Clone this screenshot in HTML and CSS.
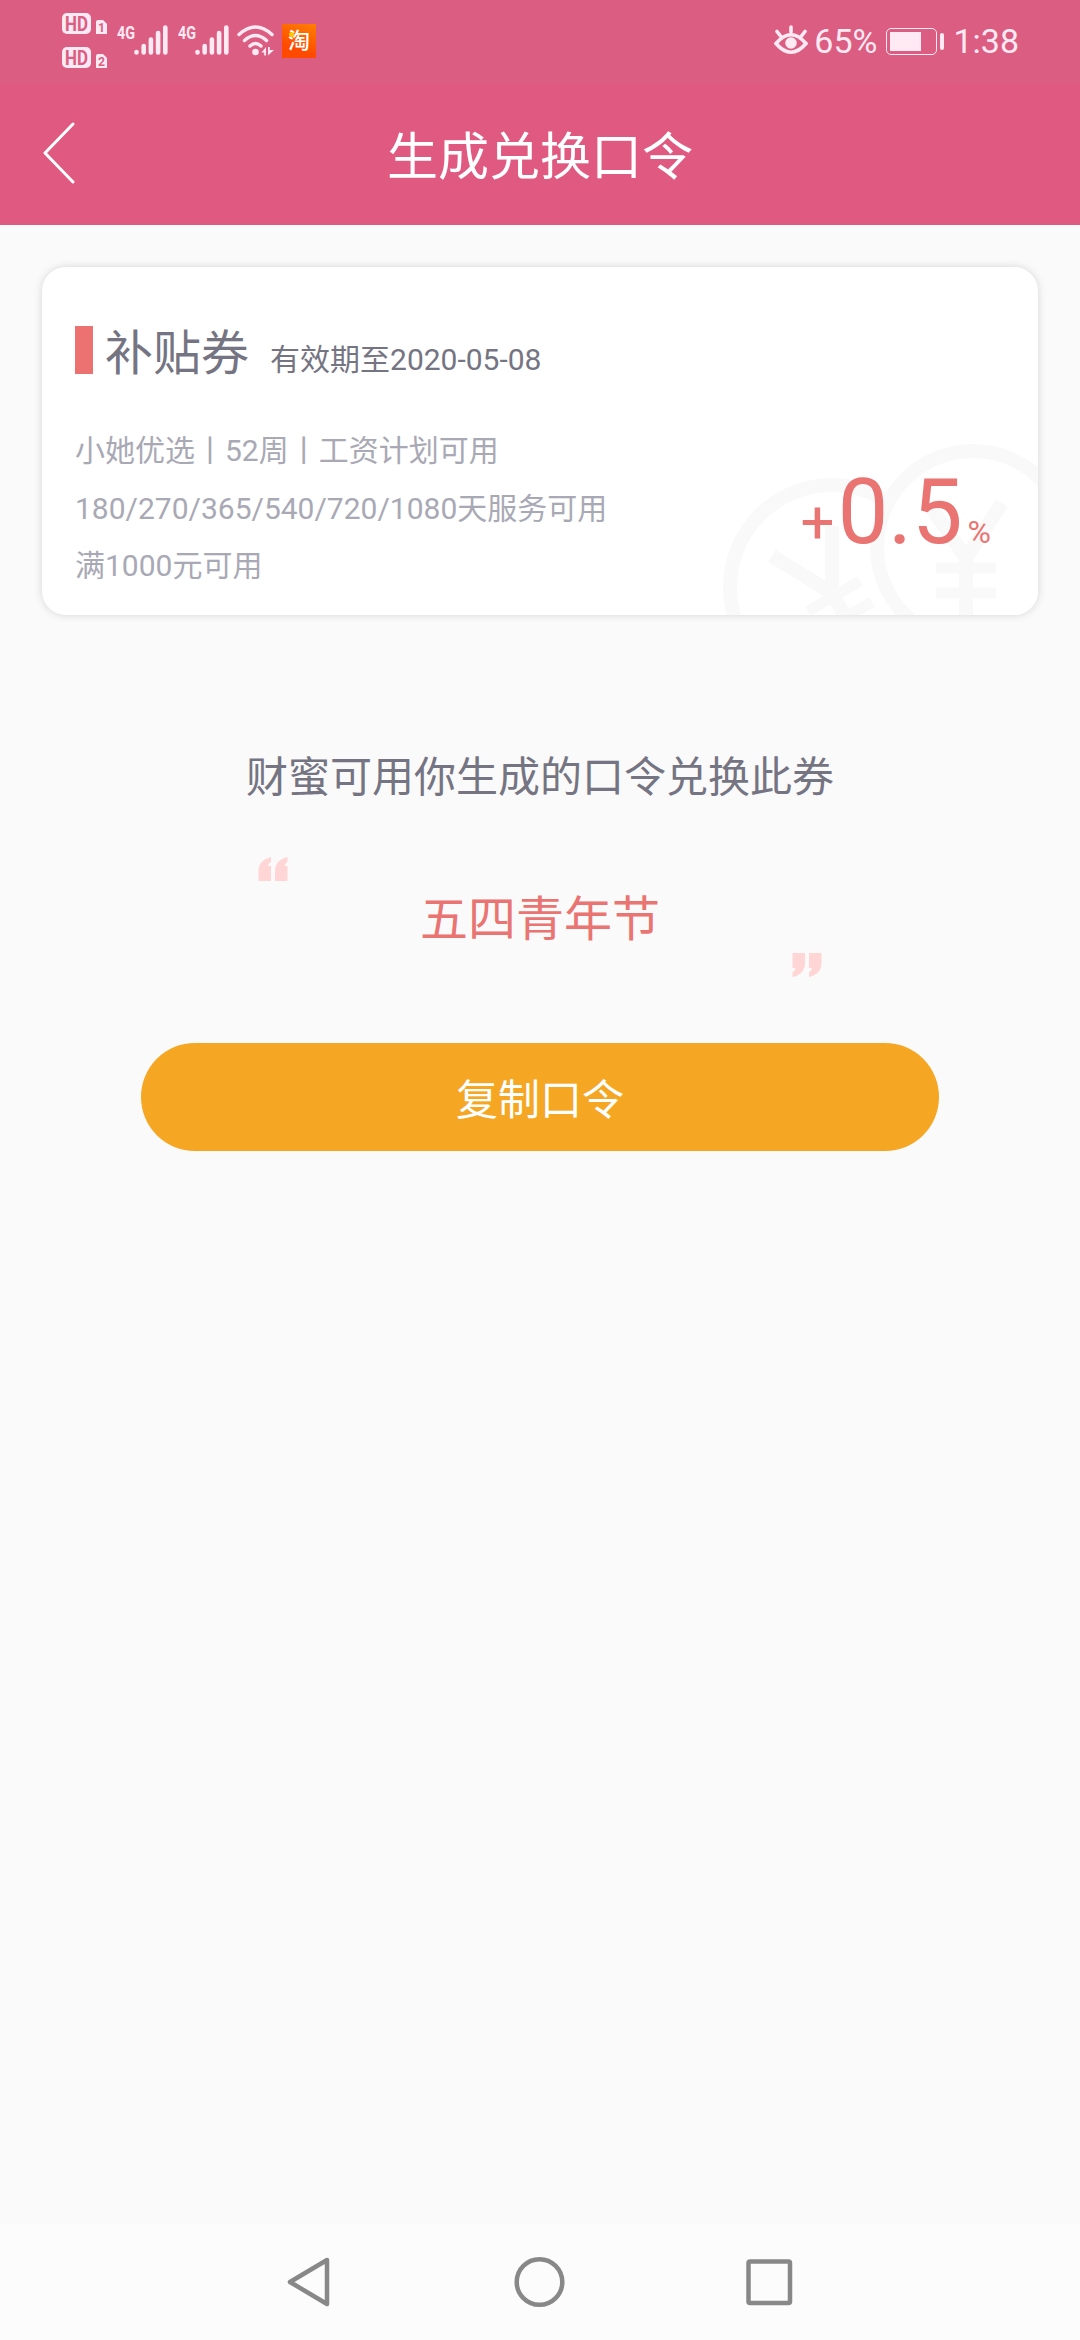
FILE: index.html
```html
<!DOCTYPE html>
<html lang="zh-CN">
<head>
    <meta charset="UTF-8">
    <meta name="viewport" content="width=device-width, initial-scale=1.0">
    <title>生成兑换口令</title>
    <link rel="stylesheet" href="styles.css">
</head>
<body>
    <div class="status-bar">
        <div class="hd-list">
            <svg class="hd" width="46" height="21" viewBox="0 0 46 21">
                <rect width="29" height="21" rx="5"/>
                <path d="M34 9Q34 7 36 7H41L45 11V21H34z"/>
                <text x="3" y="17.500" font-size="19.500" textLength="23" lengthAdjust="spacingAndGlyphs">HD</text>
                <text x="36" y="19" font-size="13" textLength="7" lengthAdjust="spacingAndGlyphs">1</text>
            </svg>
            <svg class="hd" width="46" height="21" viewBox="0 0 46 21">
                <rect width="29" height="21" rx="5"/>
                <path d="M34 9Q34 7 36 7H41L45 11V21H34z"/>
                <text x="3" y="17.500" font-size="19.500" textLength="23" lengthAdjust="spacingAndGlyphs">HD</text>
                <text x="36" y="19" font-size="13" textLength="7" lengthAdjust="spacingAndGlyphs">2</text>
            </svg>
        </div>
        <svg class="signal" width="61" height="40" viewBox="0 -8 61 40">
            <text x="0" y="14.500" font-size="19" textLength="18" lengthAdjust="spacingAndGlyphs">4G</text>
            <path d="M19.500 28v0.500M26.700 22v6.500M33.900 15.500v13M41.100 9v19.500M48.300 3.500v25"/>
        </svg>
        <svg class="signal" width="61" height="40" viewBox="0 -8 61 40">
            <text x="0" y="14.500" font-size="19" textLength="18" lengthAdjust="spacingAndGlyphs">4G</text>
            <path d="M19.500 28v0.500M26.700 22v6.500M33.900 15.500v13M41.100 9v19.500M48.300 3.500v25"/>
        </svg>
        <svg class="wifi" width="38" height="32" viewBox="0 0 38 32">
            <path class="arc" d="M2 10.500Q18.500 -4.500 35 10.500M7.500 16.500Q18.500 6.500 29.500 16.500M13 22Q18.500 17 24 22"/>
            <circle cx="18.500" cy="28" r="3.300"/>
            <path d="M24.500 28.500l4.500-5.500v8.500h-1.800v-3zM31 31.500v-8.500h1.800v3h4.200z"/>
        </svg>
        <span class="taobao">淘</span>
        <div class="status-right">
            <svg class="eye" width="34" height="32" viewBox="0 0 34 32">
                <path d="M2 19.500Q17 2 32 19.500Q17 37 2 19.500zM17 8V3M6.500 12L3 7.500M27.500 12L31 7.500"/>
                <circle cx="17" cy="19" r="5.800"/>
            </svg>
            <span class="percent">65%</span>
            <span class="battery"><span class="level"></span></span>
            <span class="battery-tip"></span>
            <span class="time">1:38</span>
        </div>
    </div>

    <div class="header">
        <svg class="back" width="34" height="62" viewBox="0 0 34 62"><path d="M31 2L3 31L31 60"/></svg>
        <h1>生成兑换口令</h1>
    </div>

    <div class="coupon">
        <svg class="coins" width="320" height="174" viewBox="718 440 320 174">
            <circle cx="832" cy="586" r="102"/>
            <circle class="front" cx="973" cy="546" r="96"/>
            <path d="M772 555L832 592L832 525M832 592L850 624"/>
            <path class="bar" d="M808 610L860 580M822 629L872 601M936 567H996M936 592H996"/>
            <path d="M928 502L966 557L1002 502M966 557V620"/>
        </svg>
        <div class="coupon-title">
            <span class="mark"></span>
            <h2>补贴券</h2>
            <span class="expire">有效期至2020-05-08</span>
        </div>
        <div class="coupon-info">
            <p>小她优选丨52周丨工资计划可用</p>
            <p>180/270/365/540/720/1080天服务可用</p>
            <p>满1000元可用</p>
        </div>
        <div class="rate"><span class="plus">+</span>0.5<span class="unit">%</span></div>
    </div>

    <p class="tip">财蜜可用你生成的口令兑换此券</p>
    <div class="code">
        <svg class="quote" width="30" height="24" viewBox="0 0 30 24"><path d="M0.500 24V14Q0.500 3 13 0V5Q10.500 6 10 9H13V24zM17 24V14Q17 3 29.500 0V5Q27 6 26.500 9H29.500V24z"/></svg>
        <span>五四青年节</span>
        <svg class="quote quote-end" width="30" height="24" viewBox="0 0 30 24"><path d="M13 0V10Q13 21 0.500 24V19Q3 18 3.500 15H0.500V0zM29.500 0V10Q29.500 21 17 24V19Q19.500 18 20 15H17V0z"/></svg>
    </div>
    <button class="copy">复制口令</button>

    <div class="nav-bar">
        <svg width="50" height="54" viewBox="0 0 50 54"><path d="M43 5L6 27L43 49z"/></svg>
        <svg width="54" height="54" viewBox="0 0 54 54"><circle cx="27.500" cy="27" r="22.800"/></svg>
        <svg width="50" height="54" viewBox="0 0 50 54"><rect x="4.500" y="6.500" width="41.500" height="41.500" rx="1.500"/></svg>
    </div>
</body>
</html>
```

FILE: styles.css
```css
* {
    box-sizing: border-box;
}
body {
    margin: 0;
    height: 2340px;
    display: flex;
    flex-direction: column;
    background-color: #fafafa;
    font-family: Roboto, "Noto Sans CJK SC", sans-serif;
    color: #757482;
    overflow: hidden;
}
h1, h2, p {
    margin: 0;
    font-weight: normal;
}
svg {
    display: block;
    flex: none;
}

/* status bar */
.status-bar {
    height: 84px;
    padding: 0 62px;
    display: flex;
    align-items: flex-start;
    background-color: #db5d82;
    color: #ffe9f3;
}
.hd-list {
    width: 55px;
    padding-top: 13px;
}
.hd {
    margin-bottom: 13px;
    fill: #ffe9f3;
}
.hd text {
    fill: #db5d82;
    font-weight: bold;
}
.signal {
    margin-top: 16px;
}
.signal path {
    stroke: #ffe9f3;
    stroke-width: 4.600;
    stroke-linecap: round;
}
.signal text {
    fill: #ffe9f3;
    font-weight: bold;
}
.wifi {
    margin: 24px 0 0 -2px;
    fill: #ffe9f3;
}
.wifi .arc {
    fill: none;
    stroke: #ffe9f3;
    stroke-width: 3.500;
    stroke-linecap: round;
}
.taobao {
    position: relative;
    width: 34px;
    height: 34px;
    margin: 24px 0 0 7px;
    background: linear-gradient(200deg, #ff7f00, #ff4a00 70%);
    color: #fff;
    font-size: 22px;
    font-weight: 500;
    line-height: 34px;
    text-align: center;
}
.taobao::before {
    content: "";
    position: absolute;
    left: 7px;
    top: 8px;
    width: 5px;
    height: 5px;
    border-radius: 50%;
    background-color: #ffc800;
}
.status-right {
    display: flex;
    align-items: center;
    margin-left: auto;
    margin-right: -1px;
    height: 82px;
    font-size: 34px;
}
.eye {
    margin: 0 6px 2px 0;
    fill: #ffe9f3;
}
.eye path {
    fill: none;
    stroke: #ffe9f3;
    stroke-width: 3.600;
    stroke-linecap: round;
}
.battery {
    width: 51px;
    height: 27px;
    margin-left: 9px;
    padding: 3px;
    border: 1.500px solid #ffe9f3;
    border-radius: 5px;
}
.level {
    display: block;
    width: 31px;
    height: 19px;
    background-color: #ffe9f3;
}
.battery-tip {
    width: 4px;
    height: 17px;
    margin: 0 9px 0 3px;
    border-radius: 2px;
    background-color: #ffe9f3;
}

/* title bar */
.header {
    height: 141px;
    display: grid;
    grid-template-columns: 1fr auto 1fr;
    align-items: center;
    padding: 0 42px;
    background-color: #df5980;
    color: #fff;
}
.header h1 {
    padding-top: 7px;
    font-size: 51px;
    line-height: 134px;
}
.back {
    margin-bottom: 4px;
    fill: none;
    stroke: #fff;
    stroke-width: 3;
    stroke-linecap: round;
    stroke-linejoin: round;
}

/* coupon card */
.coupon {
    position: relative;
    height: 348px;
    margin: 42px 42px 0;
    padding: 54px 33px 0;
    border-radius: 24px;
    background-color: #fff;
    box-shadow: 0 0 9px rgba(0, 0, 0, 0.15);
    overflow: hidden;
}
.coins {
    position: absolute;
    right: 0;
    bottom: 0;
    fill: none;
    stroke: #f9f9f9;
    stroke-width: 14;
}
.coins .front {
    fill: #fff;
}
.coins .bar {
    stroke-width: 11;
}
.coupon-title {
    display: flex;
    align-items: baseline;
    height: 65px;
    line-height: 65px;
}
.mark {
    width: 18px;
    height: 48px;
    margin-top: 5px;
    align-self: flex-start;
    background-color: #eb7270;
}
.coupon h2 {
    margin: 0 21px 0 12px;
    font-size: 48px;
}
.expire {
    font-size: 30px;
}
.coupon-info {
    margin-top: 36px;
    font-size: 30px;
    line-height: 58px;
    color: #a9a9b5;
}
.coupon-info p:last-child {
    line-height: 56px;
}
.rate {
    position: absolute;
    right: 47px;
    bottom: 30px;
    color: #e97472;
    font-size: 90px;
    line-height: 106px;
}
.plus {
    margin-right: 3px;
    font-size: 60px;
}
.unit {
    margin-left: 5px;
    font-size: 32px;
}

/* exchange code */
.tip {
    margin-top: 132px;
    font-size: 42px;
    line-height: 62px;
    text-align: center;
}
.code {
    display: flex;
    justify-content: space-between;
    width: 564px;
    height: 120px;
    margin: 48px auto 0;
    color: #e97472;
    font-size: 48px;
    line-height: 125px;
}
.quote {
    fill: #ffd6d5;
}
.quote-end {
    align-self: flex-end;
}
.copy {
    width: 798px;
    height: 108px;
    margin: 66px auto 0;
    padding: 0 0 2px;
    border: none;
    border-radius: 54px;
    background-color: #f5a623;
    color: #fff;
    font-family: inherit;
    font-size: 42px;
}

/* system keys */
.nav-bar {
    display: flex;
    align-items: center;
    justify-content: space-between;
    height: 116px;
    margin-top: auto;
    padding: 0 286px 0 284px;
    background-color: #fcfcfc;
}
.nav-bar svg {
    fill: none;
    stroke: #888;
    stroke-width: 4.500;
    stroke-linejoin: round;
}
```
